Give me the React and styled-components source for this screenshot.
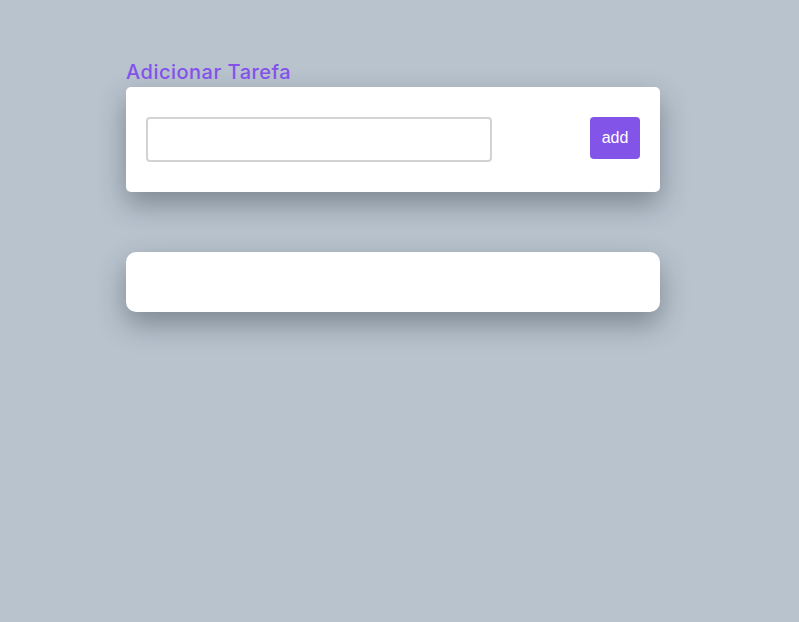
import React from "react";
import styled, { createGlobalStyle } from "styled-components";

const GlobalStyle = createGlobalStyle`
  html, body {
    margin: 0;
    padding: 0;
    background: #b8c3ce;
  }
  body {
    min-height: 100vh;
    font-family: "Liberation Sans", Arial, sans-serif;
  }
`;

const Page = styled.main`
  width: 534px;
  padding: 60px 0 60px 126px;
`;

const Title = styled.h2`
  margin: 0 0 3px;
  font-family: Inter, "Noto Sans", sans-serif;
  font-weight: 500;
  font-size: 20px;
  line-height: 24px;
  letter-spacing: 0.5px;
  color: #8452ea;
`;

const Card = styled.section`
  background: #fff;
  border-radius: ${(props) => props.radius || 5}px;
  box-shadow: 0 12px 28px rgba(30, 40, 50, 0.38);
`;

const Form = styled(Card)`
  display: flex;
  justify-content: space-between;
  align-items: flex-start;
  padding: 30px 20px;
  margin-bottom: 60px;
`;

const Input = styled.input`
  box-sizing: border-box;
  width: 346px;
  height: 45px;
  border: 2px solid #d3d3d3;
  border-radius: 4px;
  outline: none;
  font-size: 16px;
  padding: 0 10px;
`;

const AddButton = styled.button`
  width: 50px;
  height: 42px;
  border: none;
  border-radius: 4px;
  background: #8354e8;
  color: #fff;
  font-family: "Liberation Sans", Arial, sans-serif;
  font-size: 16px;
  cursor: pointer;
`;

const List = styled(Card)`
  height: 60px;
`;

export default function App() {
  return (
    <>
      <GlobalStyle />
      <Page>
        <Title>Adicionar Tarefa</Title>
        <Form as="form" onSubmit={(e) => e.preventDefault()}>
          <Input type="text" />
          <AddButton type="submit">add</AddButton>
        </Form>
        <List radius={10} />
      </Page>
    </>
  );
}
